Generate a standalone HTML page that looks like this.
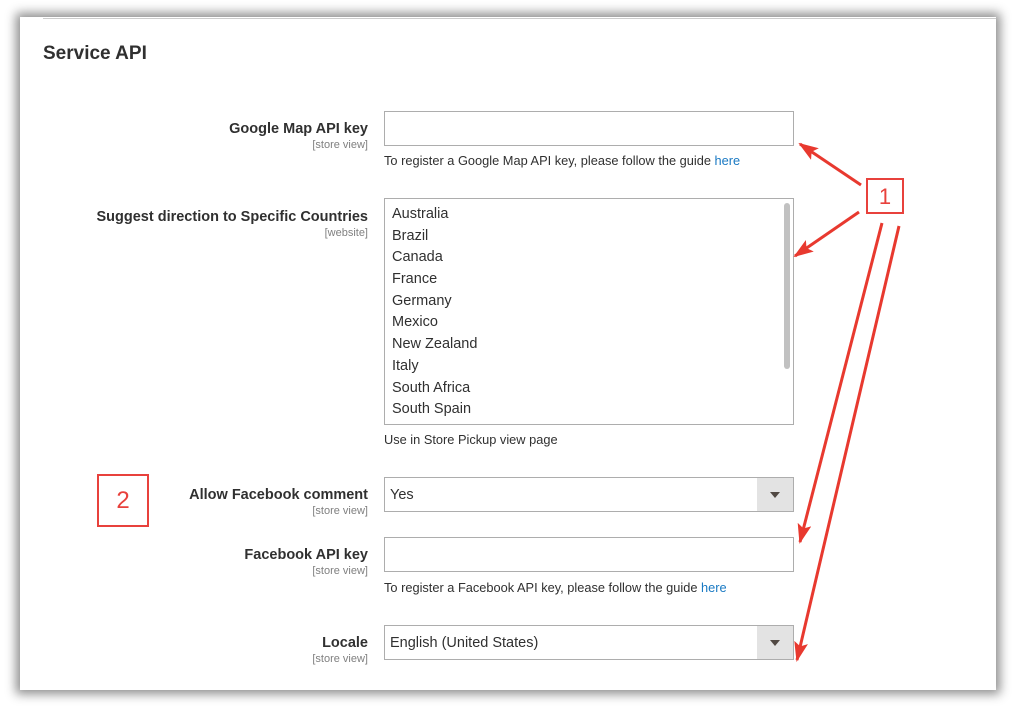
<!DOCTYPE html>
<html><head><style>
*{margin:0;padding:0;box-sizing:border-box}
body{width:1017px;height:708px;background:#fff;position:relative;overflow:hidden;font-family:"Liberation Sans",sans-serif;color:#303030}
.panel{position:absolute;left:20px;top:17px;width:976px;height:673px;background:#fff;box-shadow:0 0 10px 4px rgba(0,0,0,.45)}
.a{position:absolute}
.lbl{position:absolute;right:649px;text-align:right;font-weight:bold;font-size:14.5px;color:#303030;white-space:nowrap}
.sc{position:absolute;right:649px;text-align:right;font-size:11px;color:#808080;white-space:nowrap}
.inp{position:absolute;left:384px;width:410px;height:35px;border:1px solid #adadad;background:#fff}
.note{position:absolute;left:384px;font-size:12.8px;color:#303030;white-space:nowrap}
.note span{color:#1979c3}
.sel{position:absolute;left:384px;width:410px;height:35px;border:1px solid #adadad;background:#fff;font-size:14.5px;padding:9px 0 0 5px}
.sel .btn{position:absolute;right:0;top:0;width:36px;height:33px;background:#e3e3e3}
.sel .btn:after{content:"";position:absolute;left:13px;top:14px;border-left:5px solid transparent;border-right:5px solid transparent;border-top:6px solid #514943}
.list{position:absolute;left:384px;top:198px;width:410px;height:227px;border:1px solid #adadad;background:#fff}
.list div{font-size:14.5px;height:21.7px;line-height:21.7px;padding-left:7px}
</style></head><body>
<div class="panel"></div>
<div class="a" style="left:43px;top:18px;width:953px;height:1px;background:#ccc"></div>
<div class="a" style="left:43px;top:43px;font-size:19px;font-weight:bold;color:#303030">Service API</div>

<div class="lbl" style="top:121px">Google Map API key</div>
<div class="sc" style="top:139px">[store view]</div>
<div class="inp" style="top:111px"></div>
<div class="note" style="top:153px">To register a Google Map API key, please follow the guide <span>here</span></div>

<div class="lbl" style="top:209px">Suggest direction to Specific Countries</div>
<div class="sc" style="top:227px">[website]</div>
<div class="list" style="padding-top:5px">
<div>Australia</div><div>Brazil</div><div>Canada</div><div>France</div><div>Germany</div><div>Mexico</div><div>New Zealand</div><div>Italy</div><div>South Africa</div><div>South Spain</div>
<span class="a" style="left:399px;top:4px;width:6px;height:166px;background:#c1c1c1;border-radius:3px"></span>
</div>
<div class="note" style="top:432px">Use in Store Pickup view page</div>

<div class="lbl" style="top:487px">Allow Facebook comment</div>
<div class="sc" style="top:505px">[store view]</div>
<div class="sel" style="top:477px">Yes<div class="btn"></div></div>

<div class="lbl" style="top:547px">Facebook API key</div>
<div class="sc" style="top:565px">[store view]</div>
<div class="inp" style="top:537px"></div>
<div class="note" style="top:580px">To register a Facebook API key, please follow the guide <span>here</span></div>

<div class="lbl" style="top:635px">Locale</div>
<div class="sc" style="top:653px">[store view]</div>
<div class="sel" style="top:625px">English (United States)<div class="btn"></div></div>

<div class="a" style="left:97px;top:474px;width:52px;height:53px;border:2.5px solid #e8413c;color:#e8413c;font-size:24px;text-align:center;line-height:50px">2</div>
<div class="a" style="left:866px;top:178px;width:38px;height:36px;border:2.5px solid #e8413c;color:#e8413c;font-size:22px;text-align:center;line-height:33px">1</div>

<svg class="a" style="left:0;top:0" width="1017" height="708">
<defs>
<marker id="m" markerWidth="20" markerHeight="14" refX="18" refY="7" orient="auto" markerUnits="userSpaceOnUse"><path d="M0,0 L20,7 L0,14 L4,7z" fill="#e8392f"/></marker></defs>
<g stroke="#e8392f" stroke-width="3" fill="none">
<line x1="861" y1="185" x2="800" y2="144" marker-end="url(#m)"/>
<line x1="859" y1="212" x2="795" y2="256" marker-end="url(#m)"/>
<line x1="882" y1="223" x2="800" y2="542" marker-end="url(#m)"/>
<line x1="899" y1="226" x2="797" y2="660" marker-end="url(#m)"/>
</g></svg>
</body></html>
